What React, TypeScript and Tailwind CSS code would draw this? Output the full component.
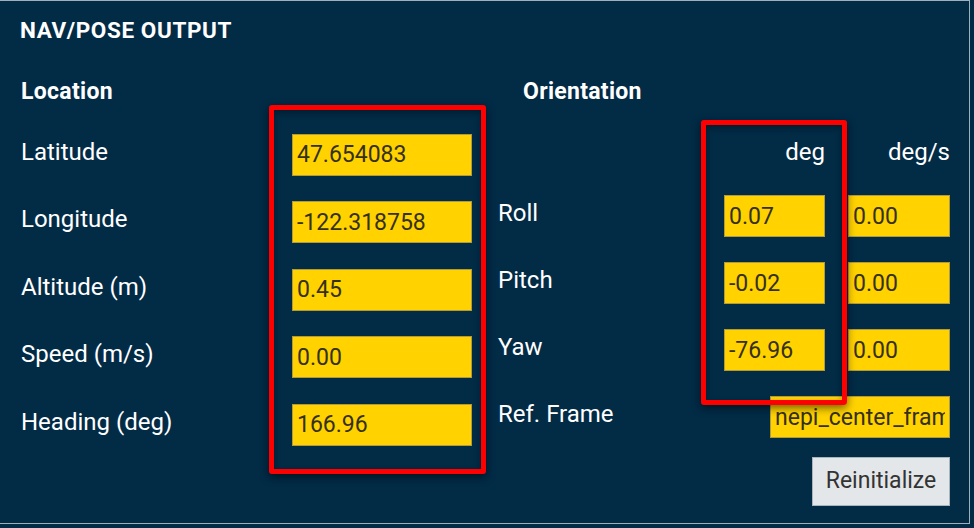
import React from "react";

const font = { fontFamily: "Roboto, 'Liberation Sans', sans-serif" };

function Field({ value, w }: { value: string; w: string }) {
  return (
    <input
      readOnly
      value={value}
      className={`${w} h-[42px] shrink-0 bg-[#ffd200] border border-[#b39b3c] px-[4px] text-[23px] leading-[40px] text-[#353018] outline-none`}
    />
  );
}

export default function App() {
  const loc = [
    ["Latitude", "47.654083"],
    ["Longitude", "-122.318758"],
    ["Altitude (m)", "0.45"],
    ["Speed (m/s)", "0.00"],
    ["Heading (deg)", "166.96"],
  ];
  const ori = [
    ["Roll", "0.07", "0.00"],
    ["Pitch", "-0.02", "0.00"],
    ["Yaw", "-76.96", "0.00"],
  ];
  return (
    <div className="w-[974px] h-[528px] bg-[#022b46] overflow-hidden" style={font}>
      <div className="relative w-[970px] h-[524px] border-t border-r border-b border-[#9fb0bc] pl-[20px] pt-[17px] text-white">
        <div className="text-[22.5px] leading-[24px] font-bold tracking-[0.6px]">NAV/POSE OUTPUT</div>
        <div className="flex mt-[38px]">
          {/* Location */}
          <div className="w-[452px] flex flex-col">
            <div className="text-[23px] leading-[24px] font-bold tracking-[0.3px] pl-[1px]">Location</div>
            <div className="flex flex-col gap-[25.5px] mt-[29.5px]">
              {loc.map(([l, v]) => (
                <div key={l} className="flex items-center h-[42px]">
                  <div className="w-[272px] text-[24px] leading-[24px] mb-[6px] pl-[1px]">{l}</div>
                  <Field value={v} w="w-[180px]" />
                </div>
              ))}
            </div>
          </div>
          {/* Orientation */}
          <div className="w-[452px] ml-[26px] flex flex-col">
            <div className="pl-[25px] text-[23px] leading-[24px] font-bold tracking-[0.3px]">Orientation</div>
            <div className="flex justify-end mt-[35.5px] text-[24px] leading-[24px]">
              <div className="w-[101px] text-right">deg</div>
              <div className="w-[125px] text-right">deg/s</div>
            </div>
            <div className="flex flex-col gap-[25px] mt-[31.5px]">
              {ori.map(([l, a, b]) => (
                <div key={l} className="flex items-center h-[42px]">
                  <div className="flex-1 text-[24px] leading-[24px] mb-[6px]">{l}</div>
                  <Field value={a} w="w-[101px]" />
                  <div className="w-[23px]" />
                  <Field value={b} w="w-[102px]" />
                </div>
              ))}
              <div className="flex items-center h-[42px]">
                <div className="flex-1 text-[24px] leading-[24px] mb-[6px]">Ref. Frame</div>
                <Field value="nepi_center_frame" w="w-[180px]" />
              </div>
            </div>
            <div className="flex justify-end mt-[18.5px]">
              <button className="w-[138px] h-[49px] bg-[#e3e7ea] border border-[#aab4bd] text-[23px] text-[#333]">
                Reinitialize
              </button>
            </div>
          </div>
        </div>
        {/* annotation boxes */}
        <div className="absolute left-[269px] top-[104px] w-[217px] h-[369px] border-[5px] border-[#ff0000] rounded-[3px] shadow-[0_3px_8px_rgba(0,0,0,0.55),inset_0_3px_6px_rgba(0,0,0,0.35)]" />
        <div className="absolute left-[701px] top-[119px] w-[146px] h-[285px] border-[5px] border-[#ff0000] rounded-[3px] shadow-[0_3px_8px_rgba(0,0,0,0.55),inset_0_3px_6px_rgba(0,0,0,0.35)]" />
      </div>
    </div>
  );
}
